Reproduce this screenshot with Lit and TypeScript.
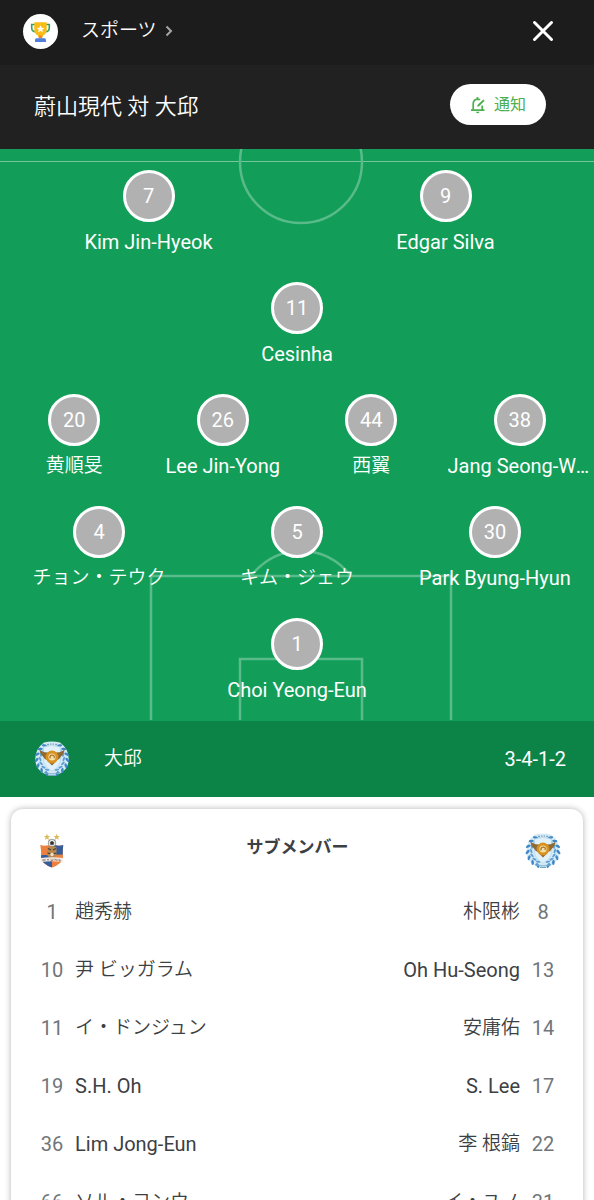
import { LitElement, html, css, svg } from "lit";
import { customElement, property } from "lit/decorators.js";

type Player = { no: number; name: string };

const formation: Player[][] = [
  [{ no: 7, name: "Kim Jin-Hyeok" }, { no: 9, name: "Edgar Silva" }],
  [{ no: 11, name: "Cesinha" }],
  [
    { no: 20, name: "黄順旻" },
    { no: 26, name: "Lee Jin-Yong" },
    { no: 44, name: "西翼" },
    { no: 38, name: "Jang Seong-Won" },
  ],
  [
    { no: 4, name: "チョン・テウク" },
    { no: 5, name: "キム・ジェウ" },
    { no: 30, name: "Park Byung-Hyun" },
  ],
  [{ no: 1, name: "Choi Yeong-Eun" }],
];

const substitutes: [Player, Player][] = [
  [{ no: 1, name: "趙秀赫" }, { no: 8, name: "朴限彬" }],
  [{ no: 10, name: "尹 ビッガラム" }, { no: 13, name: "Oh Hu-Seong" }],
  [{ no: 11, name: "イ・ドンジュン" }, { no: 14, name: "安庸佑" }],
  [{ no: 19, name: "S.H. Oh" }, { no: 17, name: "S. Lee" }],
  [{ no: 36, name: "Lim Jong-Eun" }, { no: 22, name: "李 根鎬" }],
  [{ no: 66, name: "ソル・ヨンウ" }, { no: 31, name: "イ・ユノ" }],
];

/* Japanese names are set a little smaller and lighter than Latin ones. */
const script = (name: string) => (/[A-Za-z]/.test(name) ? "latin" : "cjk");

const cjkText = css`
  .cjk {
    font-size: 19px;
    font-weight: 350;
  }
`;

/* One laurel leaf per angle, mirrored on the other side of the crest. */
const laurel = [24, 46, 68, 90, 112, 134, 154];

@customElement("daegu-crest")
export class DaeguCrest extends LitElement {
  static styles = css`
    :host { display: block; width: 36px; height: 36px; }
    svg { display: block; width: 100%; height: 100%; }
  `;
  render() {
    const side = laurel.map(
      (a) => svg`
        <g transform="rotate(${-a} 18 18)">
          <ellipse cx="17" cy="33.4" rx="1.3" ry="2.6" transform="rotate(50 17 33.4)" fill="#3f87c4"></ellipse>
          <ellipse cx="18" cy="29.8" rx="1" ry="2.3" transform="rotate(110 18 29.8)" fill="#5c9fd3"></ellipse>
        </g>`
    );
    return html`
      <svg viewBox="0 0 36 36" role="img" aria-label="大邱">
        <path d="M10 1.5 Q18-.5 26 1.5 Q35 8 34.800 19 Q34 29 25 33 Q18 37 11 33 Q2 29 1.200 19 Q1 8 10 1.5Z" fill="#d5eaf7"></path>
        <g>${side}</g>
        <g transform="translate(36 0) scale(-1 1)">${side}</g>
        <path d="M9.500 6 Q18 3 26.500 6 V19 Q26 26 18 30 Q10 26 9.500 19Z" fill="#e1f1fa" stroke="#b3d5ea" stroke-width=".7"></path>
        <path d="M13 3.500h2M16 3.200h1.400M18.600 3.200H20M21.200 3.500h2" stroke="#77a4bd" stroke-width="1.300"></path>
        <path d="M5.500 8.500 Q9 12 14.500 11.500 L13 19 Q10 18 9 15.500 Q6 13.500 5.500 8.500ZM30.500 8.500 Q27 12 21.500 11.500 L23 19 Q26 18 27 15.500 Q30 13.500 30.500 8.500Z" fill="#8f6a35"></path>
        <path d="M14 20.500 L18 24.500 L22 20.500Z" fill="#8a6530"></path>
        <circle cx="18" cy="16" r="5" fill="#f5dfa8" stroke="#d8921f" stroke-width="2.800"></circle>
        <path d="M16 17.500 Q15.500 14 18.500 14 Q21 14.500 20 17" fill="none" stroke="#a46b20" stroke-width="1.200"></path>
        <path d="M10 31.500 Q18 34 26 31.500" fill="none" stroke="#79aed0" stroke-width="1.600" stroke-dasharray="1.500 .6"></path>
        <path d="M15 34.500h6" stroke="#76a9bf" stroke-width="1"></path>
      </svg>`;
  }
}

@customElement("ulsan-crest")
export class UlsanCrest extends LitElement {
  static styles = css`
    :host { display: block; width: 36px; height: 36px; }
    svg { display: block; width: 100%; height: 100%; }
  `;
  render() {
    const star = "M0-3.2 .9-1 3.2-.9 1.4.6 2 2.9 0 1.6-2 2.9-1.4.6-3.2-.9-.9-1Z";
    return html`
      <svg viewBox="0 0 36 36" role="img" aria-label="蔚山現代">
        <path d=${star} transform="translate(13 4)" fill="#d8bb5d"></path>
        <path d=${star} transform="translate(22.7 4)" fill="#d8bb5d"></path>
        <path d="M6.3 12 Q12 14 18 11 Q24 14 29.2 12 Q28.4 18 29 25 Q28 31 18 34.5 Q8 31 7 25 Q7.6 18 6.3 12Z" fill="#ed803c"></path>
        <path d="M18 11 Q24 14 29.2 12 Q28.6 17 28.8 21.5 L18 22Z" fill="#355d9c"></path>
        <path d="M7.4 22 H18 V34.5 Q8 31 7 25Z" fill="#355d9c"></path>
        <circle cx="18" cy="10" r="3.8" fill="#f2f2f0" stroke="#777" stroke-width=".7"></circle>
        <path d="M18 8 20 9.5 19.3 11.8H16.7L16 9.5ZM14.6 8l1.3-1M21.4 8l-1.3-1" fill="#333" stroke="#555" stroke-width=".6"></path>
        <path d="M13.5 14.5 Q18 12 22.5 14.5 V23 Q18 27 13.5 23Z" fill="#b8884d"></path>
        <path d="M14 15.5 17 17M22 15.5 19 17M13.5 20l3 .8M22.5 20l-3 .8" stroke="#493b38" stroke-width="1.1"></path>
        <circle cx="18" cy="21.5" r="1.7" fill="#eee0ca"></circle>
        <path d="M6.5 25 Q18 23.5 29.5 25 L28.8 29 Q18 27.5 7.2 29Z" fill="#f3ebe2"></path>
        <path d="M9 26v2M11 26v2M9 27h2M13 26l1 1 1-1M14 27v1M17 25.7v2h2v-2M21 27.8v-2l2 2v-2M25 26v2h2M25 27h1.5" fill="none" stroke="#8b6b5a" stroke-width=".7"></path>
      </svg>`;
  }
}

@customElement("pitch-player")
export class PitchPlayer extends LitElement {
  @property({ type: Number }) no = 0;
  @property() name = "";
  static styles = [
    cjkText,
    css`
      :host {
        box-sizing: border-box;
        display: flex;
        flex: 1 1 0;
        min-width: 0;
        flex-direction: column;
        align-items: center;
        gap: 8px;
        padding: 0 2px;
      }
      .shirt {
        box-sizing: border-box;
        width: 52px;
        height: 52px;
        border: 3px solid #fff;
        border-radius: 50%;
        background: #b1b1b1;
        text-align: center;
        line-height: 46px;
      }
      .name {
        max-width: 100%;
        overflow: hidden;
        text-overflow: ellipsis;
        white-space: nowrap;
        line-height: 24px;
      }
    `,
  ];
  render() {
    return html`
      <span class="shirt">${this.no}</span>
      <span class="name ${script(this.name)}">${this.name}</span>
    `;
  }
}

@customElement("app-root")
export class AppRoot extends LitElement {
  static styles = [
    cjkText,
    css`
      :host {
        display: flex;
        flex-direction: column;
        height: 100vh;
        background: #fff;
        color: #3c4043;
        font: 20px/24px Roboto, "Noto Sans CJK JP", sans-serif;
      }
      .bar {
        flex: none;
        display: flex;
        align-items: center;
        height: 65px;
        box-sizing: border-box;
        padding: 0 36px 3px 23px;
        background: #1c1c1c;
        color: #fff;
      }
      .trophy { width: 35px; height: 35px; margin-right: 23px; }
      .crumb {
        display: flex;
        align-items: center;
        gap: 8px;
        color: inherit;
        text-decoration: none;
      }
      .chevron { width: 8px; height: 12px; }
      .close {
        display: flex;
        margin-left: auto;
        padding: 4px;
        border: 0;
        background: none;
      }
      .close svg { width: 22px; height: 22px; }
      .scroll {
        flex: 1;
        min-height: 0;
        overflow-y: auto;
        scrollbar-width: none;
      }
      .match {
        display: flex;
        align-items: center;
        justify-content: space-between;
        height: 84px;
        box-sizing: border-box;
        padding: 0 48px 5px 34px;
        background: #212121;
        color: #fff;
      }
      .title {
        margin: 0;
        padding-top: 4px;
        font-size: 22px;
        font-weight: 350;
        line-height: 32px;
      }
      .notify {
        display: flex;
        align-items: center;
        gap: 8px;
        height: 41px;
        padding: 0 20px;
        border: 0;
        border-radius: 21px;
        background: #fff;
        color: #4caf50;
        font: inherit;
        font-size: 16px;
      }
      .notify svg { width: 16px; height: 18px; }
      .pitch {
        display: grid;
        background: #129e58;
        color: #fff;
      }
      .lines, .team { grid-area: 1 / 1; }
      .lines {
        display: flex;
        flex-direction: column;
        align-items: center;
        justify-content: space-between;
        padding-left: 7px;
        background: linear-gradient(#74c79d, #74c79d) 0 12px / 100% 1px no-repeat;
      }
      .lines svg { display: block; }
      .team {
        min-width: 0;
        display: flex;
        flex-direction: column;
        gap: 28px;
        padding: 21px 0 19px;
      }
      .line { display: flex; }
      .club {
        display: flex;
        align-items: center;
        height: 76px;
        padding: 0 28px 0 34px;
        background: #0c8448;
        color: #fff;
      }
      .club-name { margin-left: 34px; }
      .shape { margin-left: auto; }
      .subs {
        margin: 12px 11px;
        padding: 10px 22px 12px 23px;
        border-radius: 12px;
        box-shadow: 0 0 6px rgba(0, 0, 0, 0.3);
      }
      .subs-head {
        display: flex;
        align-items: center;
        justify-content: space-between;
        height: 64px;
      }
      .subs-title {
        margin: 0;
        padding-bottom: 8px;
        font-size: 17px;
        font-weight: 700;
        line-height: 24px;
      }
      .table { width: 100%; border-collapse: collapse; }
      .table td { height: 58px; padding: 0; vertical-align: middle; }
      .table .num { width: 36px; text-align: center; color: #70757a; }
      .table .home { padding-left: 5px; text-align: left; }
      .table .away { padding-right: 5px; text-align: right; }
    `,
  ];

  render() {
    return html`
      <header class="bar">
        <svg class="trophy" viewBox="0 0 35 35" aria-hidden="true">
          <circle cx="17.5" cy="17.5" r="17.5" fill="#fff"></circle>
          <path d="M12 10.5H8.7v3.2q0 4 4 4M23 10.5h3.3v3.2q0 4-4 4" fill="none" stroke="#34a064" stroke-width="1.6"></path>
          <path d="M11.3 8.3h12.4v7.5q0 4.4-3.6 5.6l-.8 2h-3.6l-.8-2q-3.6-1.2-3.6-5.6z" fill="#fbbc16"></path>
          <path d="M15.8 21.5h3.4v3h-3.4z" fill="#e8892b"></path>
          <path d="M13 24.2h9l1 1.300v2.500H12v-2.500z" fill="#4e7fe0"></path>
          <path d="M17.5 11.2l1.1 2.500 2.700.2-2.100 1.800.7 2.600-2.400-1.400-2.400 1.400.7-2.600-2.100-1.800 2.700-.2z" fill="#fff"></path>
        </svg>
        <a class="crumb" href="#sports">
          <span class="cjk">スポーツ</span>
          <svg class="chevron" viewBox="0 0 8 12" aria-hidden="true">
            <path d="M1.5 1.5 6 6l-4.5 4.5" fill="none" stroke="#a5a5a5" stroke-width="2"></path>
          </svg>
        </a>
        <button class="close" aria-label="閉じる">
          <svg viewBox="0 0 22 22" aria-hidden="true">
            <path d="M2.500 2.500l17 17M19.500 2.500l-17 17" stroke="#fff" stroke-width="3" stroke-linecap="round"></path>
          </svg>
        </button>
      </header>
      <main class="scroll">
        <section class="match">
          <h1 class="title">蔚山現代 対 大邱</h1>
          <button class="notify">
            <svg viewBox="0 0 16 18" aria-hidden="true">
              <path d="M1 14.2h13.5M3.2 14V7.5Q3.5 3.5 7.5 3.2q1.5 0 2.500.7M12.200 14V9.500M7.500 3V1" fill="none" stroke="#4caf50" stroke-width="1.700"></path>
              <path d="M7.2 10.8l.5-2 5.600-5.400 1.300 1.300-5.500 5.500z" fill="#4caf50"></path>
              <path d="M6 15.700h3.500q-.3 1.600-1.700 1.600T6 15.700z" fill="#4caf50"></path>
            </svg>
            通知
          </button>
        </section>
        <section class="pitch">
          <div class="lines" aria-hidden="true">
            <svg width="126" height="76" viewBox="0 0 126 76">
              <circle cx="63" cy="13" r="61" fill="none" stroke="#59bb8a" stroke-width="2.500"></circle>
            </svg>
            <svg width="304" height="172" viewBox="0 0 304 172">
              <path d="M2 171V27H302V171M91 171V110H213V171M102 27Q122 2 152 2T202 27" fill="none" stroke="#59bb8a" stroke-width="2.500"></path>
            </svg>
          </div>
          <div class="team">
            ${formation.map(
              (row) => html`<div class="line">
                ${row.map((p) => html`<pitch-player .no=${p.no} .name=${p.name}></pitch-player>`)}
              </div>`
            )}
          </div>
        </section>
        <section class="club">
          <daegu-crest></daegu-crest>
          <span class="club-name cjk">大邱</span>
          <span class="shape">3-4-1-2</span>
        </section>
        <section class="subs">
          <div class="subs-head">
            <ulsan-crest></ulsan-crest>
            <h2 class="subs-title">サブメンバー</h2>
            <daegu-crest></daegu-crest>
          </div>
          <table class="table">
            <tbody>
              ${substitutes.map(
                ([home, away]) => html`<tr>
                  <td class="num">${home.no}</td>
                  <td class="home ${script(home.name)}">${home.name}</td>
                  <td class="away ${script(away.name)}">${away.name}</td>
                  <td class="num">${away.no}</td>
                </tr>`
              )}
            </tbody>
          </table>
        </section>
      </main>
    `;
  }
}
